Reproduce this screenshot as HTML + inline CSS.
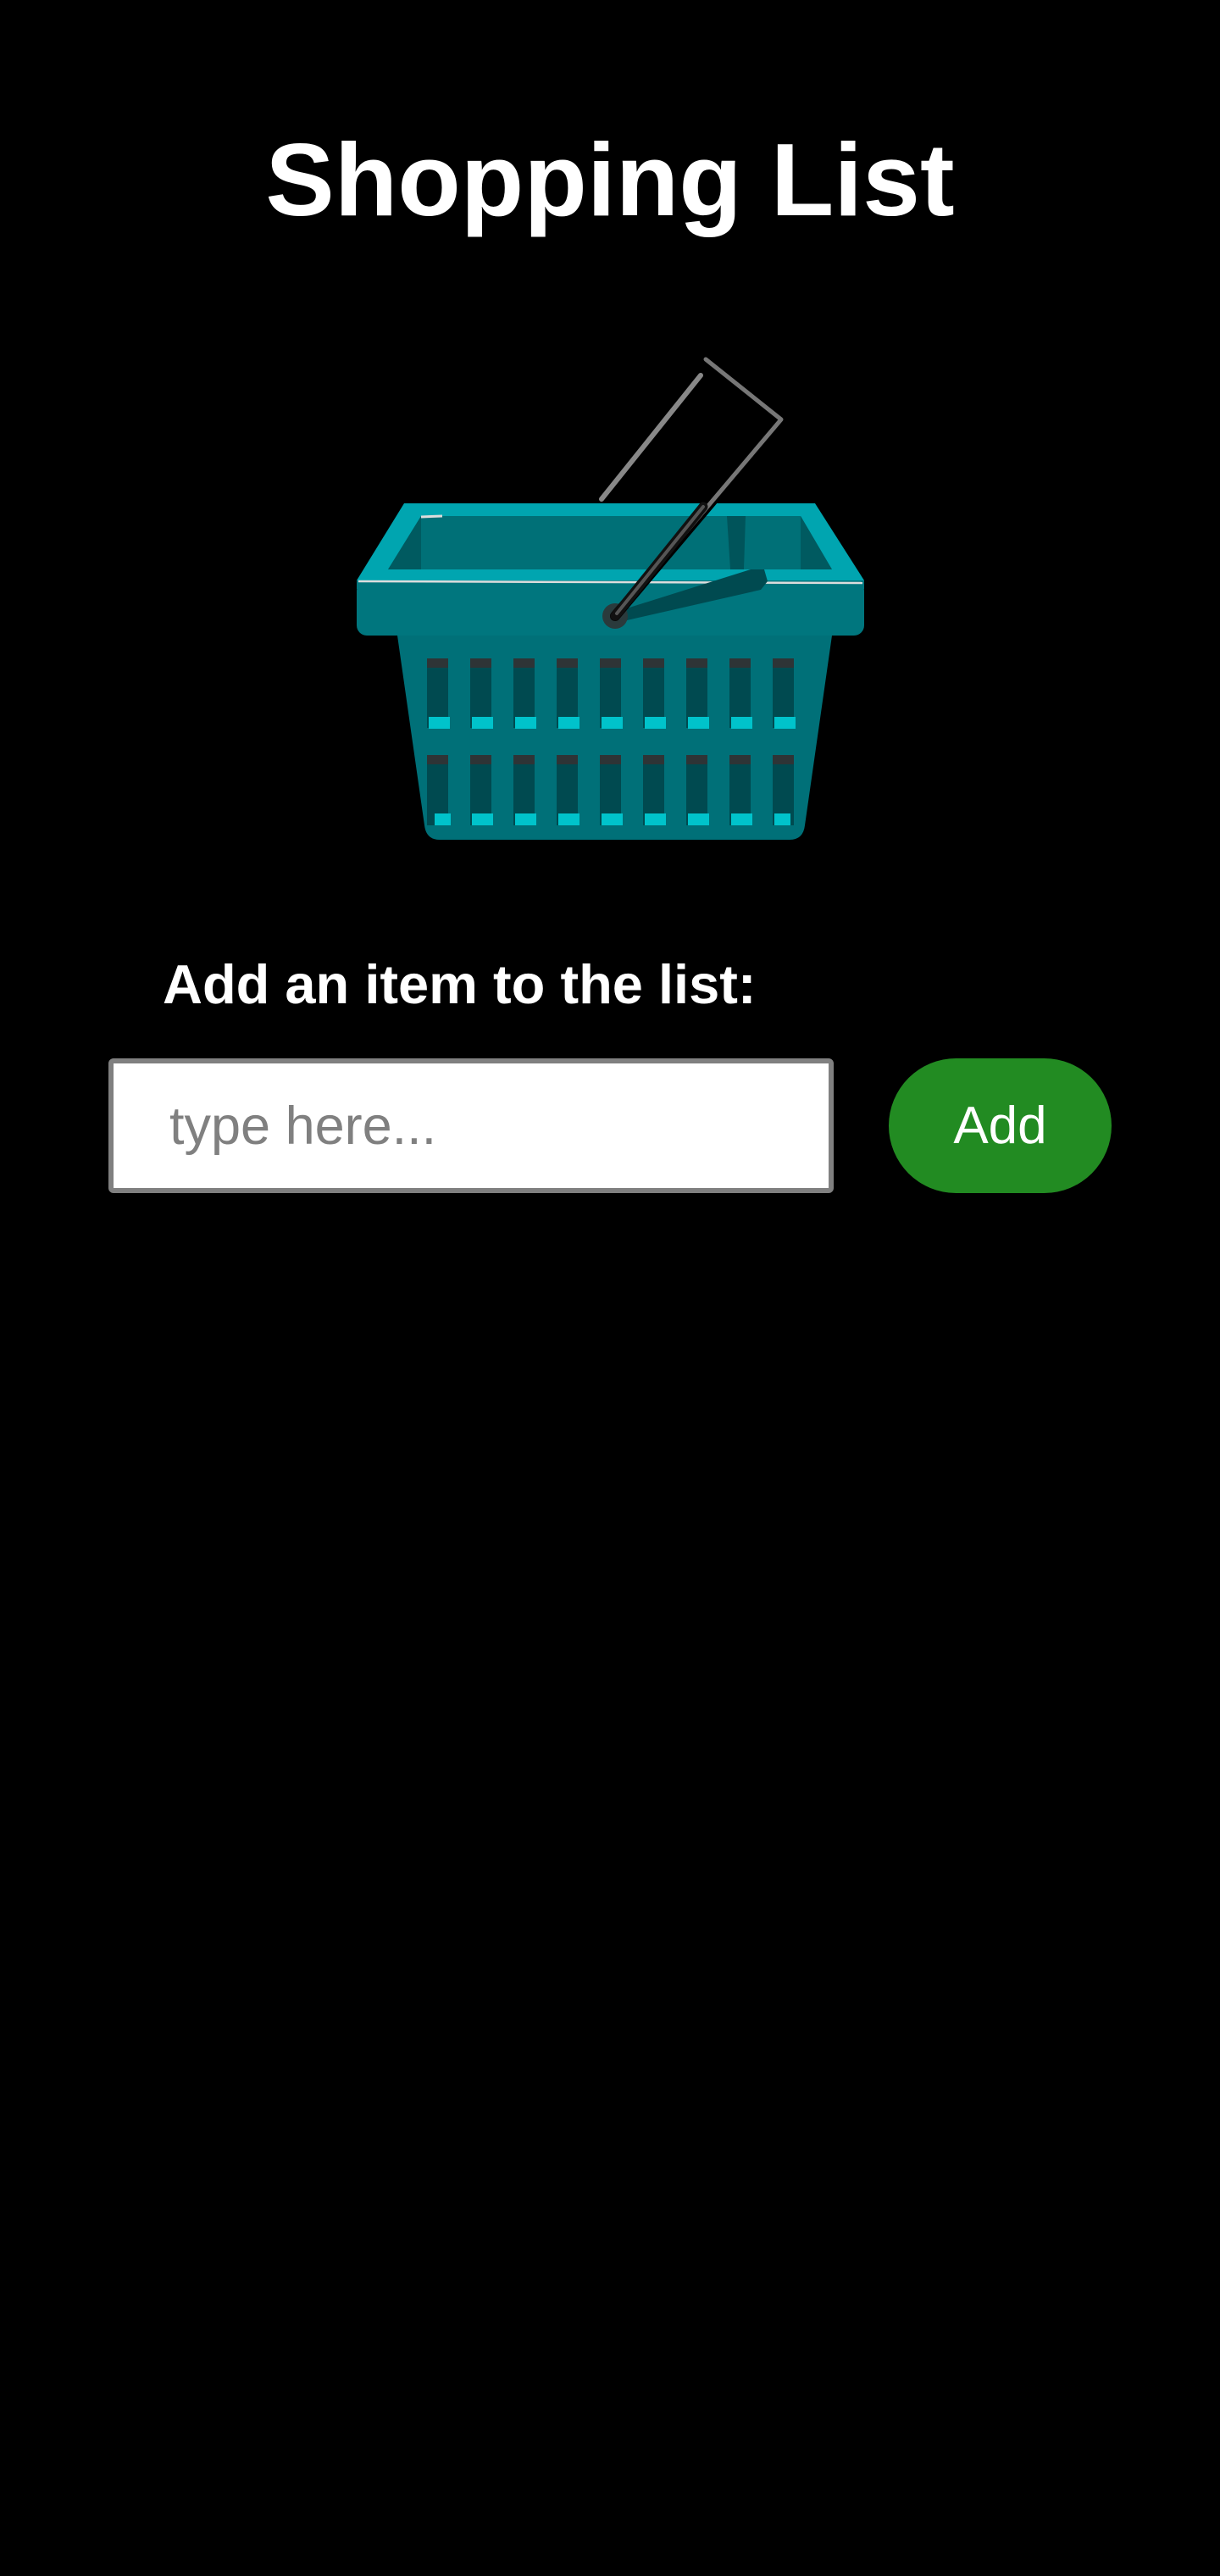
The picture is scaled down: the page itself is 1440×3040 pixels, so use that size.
<!DOCTYPE html>
<html><head><meta charset="utf-8"><style>
html,body{margin:0;padding:0;background:#000;width:1440px;height:3040px;overflow:hidden;font-family:"Liberation Sans",sans-serif;}
h1{position:absolute;left:0;width:1440px;top:142px;margin:0;text-align:center;color:#fff;font-size:122px;font-weight:bold;line-height:140px;}
.lbl{position:absolute;left:192px;top:1122px;color:#fff;font-size:65px;font-weight:bold;line-height:80px;}
.inp{position:absolute;left:128px;top:1249px;width:844px;height:147px;border:6px solid #808080;border-radius:6px;background:#fff;}
.inp span{position:absolute;left:66px;top:34px;font-size:63px;color:#808080;line-height:80px;}
.btn{position:absolute;left:1049px;top:1249px;width:263px;height:159px;border-radius:80px;background:#228B22;color:#fff;font-size:62px;text-align:center;line-height:159px;}
svg{position:absolute;left:0;top:0;}
</style></head><body>
<h1>Shopping List</h1>
<svg width="1440" height="1100" viewBox="0 0 1440 1100">
 <polyline points="710,589 827,443" stroke="#888" stroke-width="6" fill="none" stroke-linecap="round"/>
 <polygon points="477,594 962,594 1020,685 421,685" fill="#00a5b0"/>
 <polygon points="497,609 945,609 982,672 458,672" fill="#006e74"/>
 <polygon points="497,609 945,609 945,672 497,672" fill="#007077"/>
 <polygon points="458,672 497,609 497,672" fill="#005a60"/>
 <polygon points="945,609 982,672 945,672" fill="#005a60"/>
 <polygon points="858,609 880,609 878,672 862,672" fill="#00545a"/>
 <line x1="497" y1="610" x2="522" y2="609" stroke="#ddd" stroke-width="3"/>
 <path d="M469,750 L982,750 L950,974 Q948,991 932,991 L519,991 Q503,991 501,974 Z" fill="#007078"/>
 <g fill="#004a50">
  <rect x="504" y="777" width="25" height="82"/><rect x="555" y="777" width="25" height="82"/><rect x="606" y="777" width="25" height="82"/><rect x="657" y="777" width="25" height="82"/><rect x="708" y="777" width="25" height="82"/><rect x="759" y="777" width="25" height="82"/><rect x="810" y="777" width="25" height="82"/><rect x="861" y="777" width="25" height="82"/><rect x="912" y="777" width="25" height="82"/>
  <rect x="504" y="891" width="25" height="83"/><rect x="555" y="891" width="25" height="83"/><rect x="606" y="891" width="25" height="83"/><rect x="657" y="891" width="25" height="83"/><rect x="708" y="891" width="25" height="83"/><rect x="759" y="891" width="25" height="83"/><rect x="810" y="891" width="25" height="83"/><rect x="861" y="891" width="25" height="83"/><rect x="912" y="891" width="25" height="83"/>
 </g>
 <g fill="#2e3436">
  <rect x="504" y="777" width="25" height="11"/><rect x="555" y="777" width="25" height="11"/><rect x="606" y="777" width="25" height="11"/><rect x="657" y="777" width="25" height="11"/><rect x="708" y="777" width="25" height="11"/><rect x="759" y="777" width="25" height="11"/><rect x="810" y="777" width="25" height="11"/><rect x="861" y="777" width="25" height="11"/><rect x="912" y="777" width="25" height="11"/>
  <rect x="504" y="891" width="25" height="11"/><rect x="555" y="891" width="25" height="11"/><rect x="606" y="891" width="25" height="11"/><rect x="657" y="891" width="25" height="11"/><rect x="708" y="891" width="25" height="11"/><rect x="759" y="891" width="25" height="11"/><rect x="810" y="891" width="25" height="11"/><rect x="861" y="891" width="25" height="11"/><rect x="912" y="891" width="25" height="11"/>
 </g>
 <g fill="#00c3cb">
  <rect x="506" y="846" width="25" height="14"/><rect x="557" y="846" width="25" height="14"/><rect x="608" y="846" width="25" height="14"/><rect x="659" y="846" width="25" height="14"/><rect x="710" y="846" width="25" height="14"/><rect x="761" y="846" width="25" height="14"/><rect x="812" y="846" width="25" height="14"/><rect x="863" y="846" width="25" height="14"/><rect x="914" y="846" width="25" height="14"/>
  <rect x="513" y="960" width="19" height="14"/><rect x="557" y="960" width="25" height="14"/><rect x="608" y="960" width="25" height="14"/><rect x="659" y="960" width="25" height="14"/><rect x="710" y="960" width="25" height="14"/><rect x="761" y="960" width="25" height="14"/><rect x="812" y="960" width="25" height="14"/><rect x="863" y="960" width="25" height="14"/><rect x="914" y="960" width="19" height="14"/>
 </g>
 <rect x="421" y="685" width="599" height="65" rx="12" fill="#00767e"/>
 <rect x="421" y="685" width="599" height="10" fill="#00767e"/>
 <line x1="423" y1="686" x2="1018" y2="688" stroke="#ddd" stroke-width="2.5"/>
 <polygon points="886,672 902,672 906,686 898,696 727,735 727,722" fill="#004a50"/>
 <circle cx="726" cy="727" r="15" fill="#2a3a3c"/>
 <polyline points="726,727 922,495 833,424" stroke="#000" stroke-width="12" fill="none" stroke-linejoin="round" stroke-linecap="round"/>
 <polyline points="726,727 922,495 833,424" stroke="#777" stroke-width="5" fill="none" stroke-linejoin="round" stroke-linecap="round"/>
 <line x1="726" y1="727" x2="830" y2="598" stroke="#111" stroke-width="11" stroke-linecap="round"/>
 <line x1="728" y1="724" x2="830" y2="598" stroke="#555" stroke-width="4" stroke-linecap="round"/>
</svg>
<div class="lbl">Add an item to the list:</div>
<div class="inp"><span>type here...</span></div>
<div class="btn">Add</div>
</body></html>
